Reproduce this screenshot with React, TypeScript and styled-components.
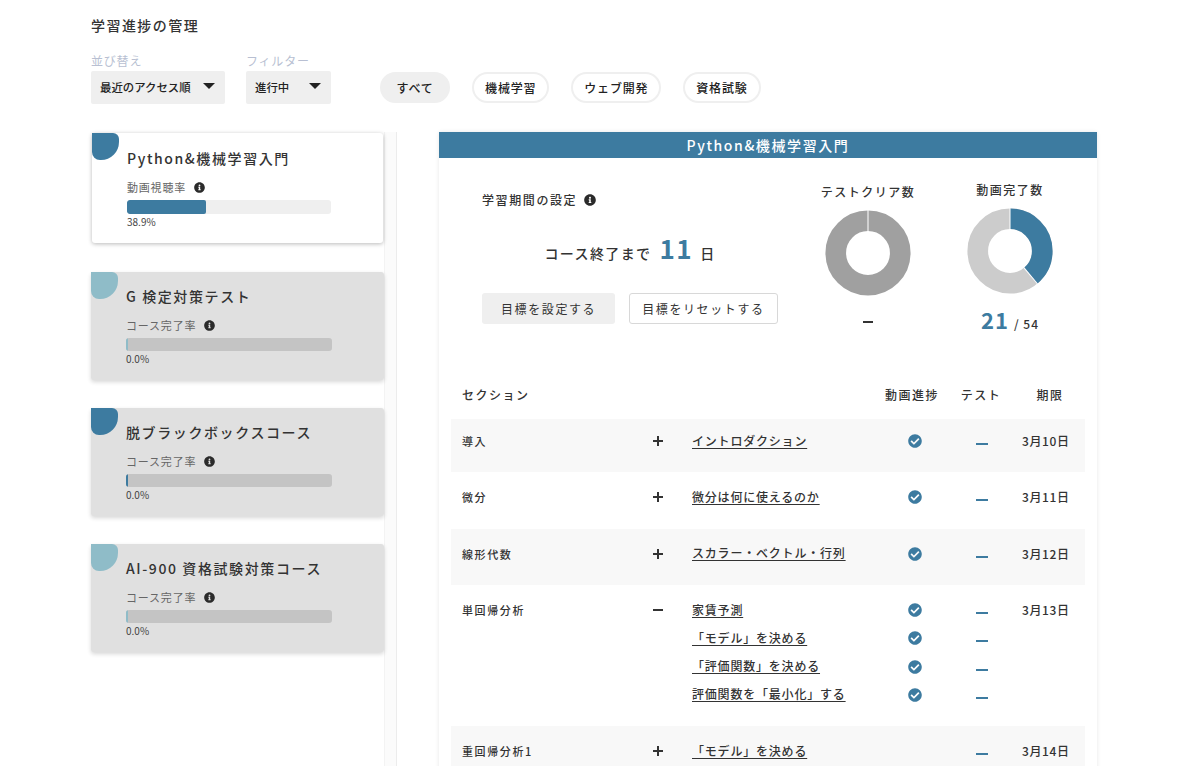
import React from 'react';
import styled, { createGlobalStyle } from 'styled-components';
import { FaCheckCircle, FaInfoCircle } from 'react-icons/fa';

const BLUE = '#3d7ba0';
const LIGHT_BLUE = '#8fbcc8';

const courses = [
    { title: 'G 検定対策テスト', accent: LIGHT_BLUE },
    { title: '脱ブラックボックスコース', accent: BLUE },
    { title: 'AI-900 資格試験対策コース', accent: LIGHT_BLUE },
];

const sections = [
    { name: '導入', open: false, date: '3月10日', lessons: [{ title: 'イントロダクション', done: true }] },
    { name: '微分', open: false, date: '3月11日', lessons: [{ title: '微分は何に使えるのか', done: true }] },
    { name: '線形代数', open: false, date: '3月12日', lessons: [{ title: 'スカラー・ベクトル・行列', done: true }] },
    {
        name: '単回帰分析',
        open: true,
        date: '3月13日',
        lessons: [
            { title: '家賃予測', done: true },
            { title: '「モデル」を決める', done: true },
            { title: '「評価関数」を決める', done: true },
            { title: '評価関数を「最小化」する', done: true },
        ],
    },
    { name: '重回帰分析1', open: false, date: '3月14日', lessons: [{ title: '「モデル」を決める', done: false }] },
];

const Donut = ({ value, base }: { value: number; base: string }) => {
    const angle = (value / 100) * Math.PI * 2;
    const x = (r: number) => 50 + r * Math.sin(angle);
    const y = (r: number) => 50 - r * Math.cos(angle);
    return (
        <DonutSvg viewBox="0 0 100 100">
            <circle cx="50" cy="50" r="37.5" fill="none" stroke={base} strokeWidth="24" />
            {value > 0 && (
                <circle
                    cx="50"
                    cy="50"
                    r="37.5"
                    fill="none"
                    stroke={BLUE}
                    strokeWidth="24"
                    pathLength={100}
                    strokeDasharray={`${value} ${100 - value}`}
                    transform="rotate(-90 50 50)"
                />
            )}
            <line x1="50" y1="0" x2="50" y2="26" stroke="#fff" strokeWidth="1.2" />
            {value > 0 && <line x1={x(24)} y1={y(24)} x2={x(50)} y2={y(50)} stroke="#fff" strokeWidth="1.2" />}
        </DonutSvg>
    );
};

const ProgressCard = ({ title, label, percent, accent, active }: {
    title: string; label: string; percent: number; accent: string; active?: boolean;
}) => (
    <Card $active={active}>
        <Blob $color={accent} />
        <CardTitle>{title}</CardTitle>
        <CardLabel>{label}<FaInfoCircle size={11} color="#2b2b2b" /></CardLabel>
        <Track $active={active}>
            <Fill $color={accent} style={{ width: percent ? `${percent}%` : '2px' }} />
        </Track>
        <Percent>{percent.toFixed(1)}%</Percent>
    </Card>
);

const App = () => {
    return (
        <Page>
            <GlobalStyle />
            <PageTitle>学習進捗の管理</PageTitle>
            <Toolbar>
                <Field>
                    <FieldLabel>並び替え</FieldLabel>
                    <Select $width={134}>最近のアクセス順<Caret /></Select>
                </Field>
                <Field>
                    <FieldLabel>フィルター</FieldLabel>
                    <Select $width={85}>進行中<Caret /></Select>
                </Field>
                <Pills>
                    <Pill $active>すべて</Pill>
                    <Pill>機械学習</Pill>
                    <Pill>ウェブ開発</Pill>
                    <Pill>資格試験</Pill>
                </Pills>
            </Toolbar>
            <Main>
                <Sidebar>
                    <CardList>
                        <ProgressCard active title="Python&機械学習入門" label="動画視聴率" percent={38.9} accent={BLUE} />
                        {courses.map((c) => (
                            <ProgressCard key={c.title} title={c.title} label="コース完了率" percent={0} accent={c.accent} />
                        ))}
                    </CardList>
                    <ScrollTrack />
                </Sidebar>
                <Panel>
                    <PanelHeader>Python&機械学習入門</PanelHeader>
                    <PanelBody>
                        <Summary>
                            <Period>
                                <PeriodTitle>学習期間の設定<FaInfoCircle size={12} color="#2b2b2b" /></PeriodTitle>
                                <Countdown>コース終了まで<BigNumber>11</BigNumber>日</Countdown>
                                <Buttons>
                                    <GoalButton $filled>目標を設定する</GoalButton>
                                    <GoalButton>目標をリセットする</GoalButton>
                                </Buttons>
                            </Period>
                            <Stat $top={24}>
                                <StatTitle>テストクリア数</StatTitle>
                                <Donut value={0} base="#a0a0a0" />
                                <StatValue><Dash $width={10} $color="#333" /></StatValue>
                            </Stat>
                            <Stat $top={22}>
                                <StatTitle>動画完了数</StatTitle>
                                <Donut value={38.9} base="#cccccc" />
                                <StatValue><StatNumber>21</StatNumber><StatTotal>/ 54</StatTotal></StatValue>
                            </Stat>
                        </Summary>
                        <TableHead>
                            <div>セクション</div>
                            <HeadCell>動画進捗</HeadCell>
                            <HeadCell>テスト</HeadCell>
                            <HeadCell>期限</HeadCell>
                        </TableHead>
                        {sections.map((s, i) => (
                            <SectionRow key={s.name} $striped={i % 2 === 0}>
                                <SectionName>{s.name}</SectionName>
                                <Toggle>
                                    <svg width="12" height="12" viewBox="0 0 12 12">
                                        <path d={s.open ? 'M1 6h10' : 'M1 6h10M6 1v10'} stroke="#333" strokeWidth="2" fill="none" />
                                    </svg>
                                </Toggle>
                                <Lessons>
                                    {s.lessons.map((l) => (
                                        <Lesson key={l.title}>
                                            <LessonLink>{l.title}</LessonLink>
                                            <CheckCell>{l.done && <FaCheckCircle size={14} color={BLUE} />}</CheckCell>
                                            <TestCell><Dash $width={12} $color={BLUE} /></TestCell>
                                        </Lesson>
                                    ))}
                                </Lessons>
                                <DateCell>{s.date}</DateCell>
                            </SectionRow>
                        ))}
                    </PanelBody>
                </Panel>
            </Main>
        </Page>
    );
};

export default App;

const GlobalStyle = createGlobalStyle`
    html, body {
        margin: 0;
        padding: 0;
        background: #fff;
    }
    body {
        font-family: "Noto Sans CJK JP", "Noto Sans", sans-serif;
        color: #333;
    }
`;

const Page = styled.div`
    height: 766px;
    padding-left: 91px;
    box-sizing: border-box;
    overflow: hidden;
`;

const PageTitle = styled.h1`
    margin: 0;
    padding-top: 15px;
    font-size: 14px;
    line-height: 20px;
    font-weight: 500;
    letter-spacing: 1.45px;
`;

const Toolbar = styled.div`
    display: flex;
    align-items: flex-end;
    gap: 21px;
    margin-top: 18px;
    height: 51px;
`;

const Field = styled.div`
    display: flex;
    flex-direction: column;
`;

const FieldLabel = styled.span`
    margin-bottom: 2px;
    font-size: 12px;
    line-height: 16px;
    letter-spacing: 0.8px;
    color: #b8bfd2;
`;

const Select = styled.div<{ $width: number }>`
    position: relative;
    width: ${(p) => p.$width}px;
    height: 33px;
    box-sizing: border-box;
    padding-left: 9px;
    background: #efefef;
    border-radius: 2px;
    font-size: 11.4px;
    font-weight: 500;
    line-height: 33px;
    color: #222;
`;

const Caret = styled.i`
    position: absolute;
    top: 12px;
    right: 10px;
    border-left: 6px solid transparent;
    border-right: 6px solid transparent;
    border-top: 6px solid #222;
`;

const Pills = styled.div`
    display: flex;
    gap: 22px;
    margin-left: 28px;
    margin-bottom: 1px;
`;

const Pill = styled.div<{ $active?: boolean }>`
    height: 31px;
    box-sizing: border-box;
    padding: 0 ${(p) => (p.$active ? 14.5 : 11)}px;
    background: ${(p) => (p.$active ? '#efefef' : '#fff')};
    border: 2px solid #efefef;
    border-radius: 16px;
    font-size: 12px;
    font-weight: 500;
    line-height: 27px;
    letter-spacing: 0.8px;
    color: #222;
`;

const Main = styled.div`
    display: flex;
    gap: 42px;
    margin-top: 28px;
`;

const Sidebar = styled.div`
    display: flex;
    width: 306px;
    flex: none;
    height: 640px;
`;

const CardList = styled.div`
    width: 293px;
    padding-top: 1px;
    box-sizing: border-box;
`;

const ScrollTrack = styled.div`
    width: 13px;
    box-sizing: border-box;
    background: #fbfbfb;
    border-left: 1px solid #f3f3f3;
    border-right: 1px solid #ececec;
`;

const Card = styled.div<{ $active?: boolean }>`
    position: relative;
    height: ${(p) => (p.$active ? 110 : 108)}px;
    margin: ${(p) => (p.$active ? '0 1px 29px' : '0 0 28px')};
    padding: ${(p) => (p.$active ? '15px 0 0 35px' : '14px 0 0 35px')};
    box-sizing: border-box;
    background: ${(p) => (p.$active ? '#fff' : '#e0e0e0')};
    border-radius: 3px;
    box-shadow: ${(p) => (p.$active ? '0 1px 4px rgba(0, 0, 0, 0.28)' : '0 2px 4px rgba(0, 0, 0, 0.16)')};
`;

const Blob = styled.span<{ $color: string }>`
    position: absolute;
    top: 0;
    left: 0;
    width: 27px;
    height: 27px;
    background: ${(p) => p.$color};
    border-radius: 0 6px 18px 8px;
`;

const CardTitle = styled.div`
    font-size: 14px;
    font-weight: 500;
    line-height: 20px;
    letter-spacing: 1.6px;
`;

const CardLabel = styled.div`
    display: flex;
    align-items: center;
    gap: 8px;
    margin-top: 11px;
    font-size: 11px;
    line-height: 16px;
    letter-spacing: 0.8px;
    color: #666;
`;

const Track = styled.div<{ $active?: boolean }>`
    width: ${(p) => (p.$active ? 204 : 206)}px;
    height: ${(p) => (p.$active ? 14 : 13)}px;
    margin-top: 5px;
    background: ${(p) => (p.$active ? '#efefef' : '#c4c4c4')};
    border-radius: 3px;
    overflow: hidden;
`;

const Fill = styled.div<{ $color: string }>`
    height: 100%;
    background: ${(p) => p.$color};
    border-radius: 2px;
`;

const Percent = styled.div`
    margin-top: 1px;
    font-size: 10px;
    line-height: 14px;
    color: #444;
`;

const Panel = styled.section`
    width: 658px;
    flex: none;
    height: 640px;
    box-shadow: 0 0 4px rgba(0, 0, 0, 0.1);
`;

const PanelHeader = styled.div`
    height: 26px;
    background: ${BLUE};
    color: #fff;
    font-size: 14px;
    font-weight: 500;
    line-height: 26px;
    letter-spacing: 1.6px;
    text-align: center;
`;

const PanelBody = styled.div`
    padding: 0 12px;
`;

const Summary = styled.div`
    display: flex;
    gap: 42px;
    height: 217px;
    box-sizing: border-box;
    padding-left: 31px;
`;

const Period = styled.div`
    flex: none;
    width: 296px;
    padding-top: 32px;
    margin-right: -2px;
`;

const PeriodTitle = styled.div`
    display: flex;
    align-items: center;
    gap: 7px;
    font-size: 12px;
    font-weight: 500;
    line-height: 20px;
    letter-spacing: 1.6px;
`;

const Countdown = styled.div`
    display: flex;
    align-items: baseline;
    justify-content: center;
    height: 30px;
    margin-top: 23px;
    font-size: 14px;
    font-weight: 500;
    line-height: 30px;
    letter-spacing: 1.4px;
`;

const BigNumber = styled.span`
    margin: 0 7px 0 8px;
    color: ${BLUE};
    font-size: 26px;
    font-weight: 700;
    letter-spacing: 1.5px;
`;

const Buttons = styled.div`
    display: flex;
    gap: 14px;
    margin-top: 30px;
`;

const GoalButton = styled.button<{ $filled?: boolean }>`
    height: 31px;
    padding: 0 ${(p) => (p.$filled ? 19 : 12)}px;
    box-sizing: border-box;
    background: ${(p) => (p.$filled ? '#efefef' : '#fff')};
    border: ${(p) => (p.$filled ? 'none' : '1px solid #d8d8d8')};
    border-radius: 3px;
    font-family: inherit;
    font-size: 12px;
    letter-spacing: 1.6px;
    white-space: nowrap;
    color: #333;
`;

const Stat = styled.div<{ $top: number }>`
    flex: none;
    display: flex;
    flex-direction: column;
    align-items: center;
    width: 100px;
    padding-top: ${(p) => p.$top}px;
`;

const StatTitle = styled.div`
    height: 28px;
    font-size: 12px;
    font-weight: 500;
    line-height: 20px;
    letter-spacing: 1.5px;
`;

const DonutSvg = styled.svg`
    display: block;
    width: 86px;
    height: 86px;
`;

const StatValue = styled.div`
    display: flex;
    align-items: baseline;
    justify-content: center;
    height: 30px;
    margin-top: 11px;
    line-height: 28px;
`;

const StatNumber = styled.span`
    color: ${BLUE};
    font-size: 22px;
    font-weight: 700;
    letter-spacing: 1px;
`;

const StatTotal = styled.span`
    margin-left: 5px;
    font-size: 12px;
    font-weight: 500;
    letter-spacing: 1px;
`;

const Dash = styled.i<{ $width: number; $color: string }>`
    display: block;
    align-self: center;
    width: ${(p) => p.$width}px;
    height: 2px;
    background: ${(p) => p.$color};
`;

const TableHead = styled.div`
    display: grid;
    grid-template-columns: 419px 62px 76px 62px;
    height: 44px;
    padding: 0 0 6px 11px;
    box-sizing: border-box;
    align-items: center;
    font-size: 12px;
    font-weight: 500;
    letter-spacing: 1.5px;
`;

const HeadCell = styled.div`
    text-align: center;
`;

const SectionRow = styled.div<{ $striped: boolean }>`
    display: grid;
    grid-template-columns: 184px 24px 1fr 63px;
    align-items: start;
    padding: 11px 0 17px 11px;
    background: ${(p) => (p.$striped ? '#f8f8f8' : '#fff')};

    ${TableHead} + & {
        padding-top: 8px;
    }
`;

const SectionName = styled.div`
    font-size: 11px;
    font-weight: 500;
    line-height: 28px;
    letter-spacing: 1.6px;
`;

const Toggle = styled.div`
    display: flex;
    align-items: center;
    justify-content: center;
    height: 28px;
`;

const Lessons = styled.div`
    padding-left: 22px;
`;

const Lesson = styled.div`
    display: grid;
    grid-template-columns: 203px 40px 27px 40px;
    height: 28.3px;
    align-items: center;
`;

const LessonLink = styled.a`
    justify-self: start;
    margin-bottom: 2px;
    font-size: 12px;
    font-weight: 500;
    letter-spacing: 0.8px;
    text-decoration: underline;
    text-underline-offset: 2px;
    color: #333;
`;

const CheckCell = styled.div`
    display: flex;
    justify-content: center;
`;

const TestCell = styled.div`
    grid-column: 4;
    display: flex;
    justify-content: center;
    padding-top: 6px;
`;

const DateCell = styled.div`
    font-size: 12px;
    font-weight: 500;
    line-height: 28px;
    letter-spacing: 0.6px;
`;
